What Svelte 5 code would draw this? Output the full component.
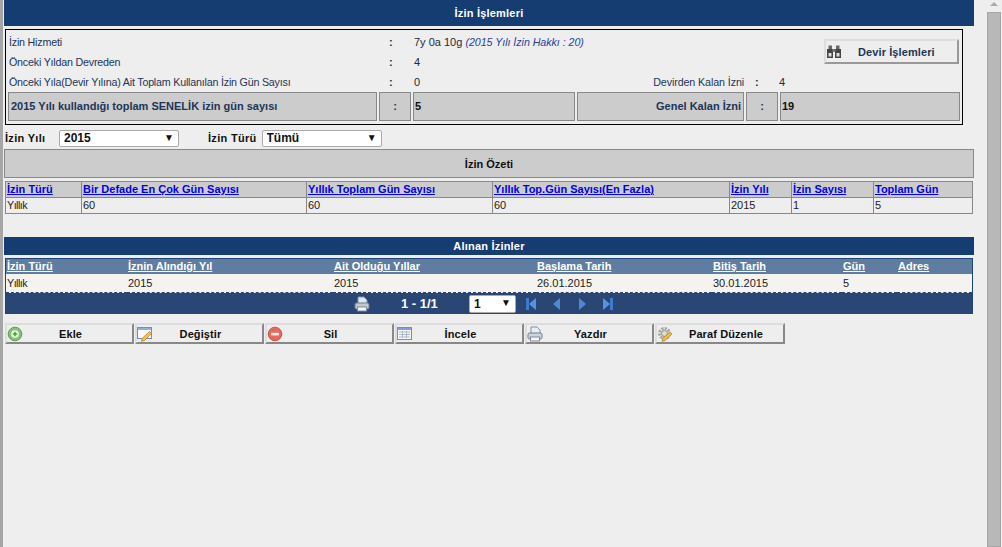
<script lang="ts">
  const ozetCols = [
    'İzin Türü',
    'Bir Defade En Çok Gün Sayısı',
    'Yıllık Toplam Gün Sayısı',
    'Yıllık Top.Gün Sayısı(En Fazla)',
    'İzin Yılı',
    'İzin Sayısı',
    'Toplam Gün'
  ];
  const ozetRow = ['Yıllık', '60', '60', '60', '2015', '1', '5'];
  const ozetWidths = [76, 225, 186, 237, 62, 82, 99];

  const alinanCols = ['İzin Türü', 'İznin Alındığı Yıl', 'Ait Olduğu Yıllar', 'Başlama Tarih', 'Bitiş Tarih', 'Gün', 'Adres'];
  const alinanRow = ['Yıllık', '2015', '2015', '26.01.2015', '30.01.2015', '5', ''];
  const alinanWidths = [121, 206, 203, 176, 130, 55, 75];

  const buttons = [
    { label: 'Ekle', icon: 'add' },
    { label: 'Değiştir', icon: 'edit' },
    { label: 'Sil', icon: 'del' },
    { label: 'İncele', icon: 'grid' },
    { label: 'Yazdır', icon: 'print' },
    { label: 'Paraf Düzenle', icon: 'gear' }
  ];
</script>

{#snippet printer(light)}
  <svg width="16" height="16" viewBox="0 0 16 16">
    <path d="M4 1h6l3 3v4H4z" fill={light ? '#e8eef8' : '#dfe8f5'} stroke="#7f93ad" />
    <rect x="1" y="7" width="14" height="6" rx="1.5" fill={light ? '#cfd3d8' : '#c3c8ce'} stroke="#6f7c8c" />
    <rect x="3.5" y="11" width="9" height="4" fill="#f4f6f8" stroke="#7f8b99" />
  </svg>
{/snippet}

{#snippet icon(name)}
  {#if name === 'add'}
    <svg width="16" height="16" viewBox="0 0 16 16">
      <circle cx="8" cy="8" r="6.8" fill="#86c276" stroke="#5b9c50" />
      <circle cx="8" cy="8" r="3.8" fill="#f2f8ee" />
      <path d="M8 5.8v4.4M5.8 8h4.4" stroke="#4d9a45" stroke-width="1.6" />
    </svg>
  {:else if name === 'edit'}
    <svg width="16" height="16" viewBox="0 0 16 16">
      <rect x="0.5" y="1.5" width="14" height="11" fill="#f7f9fd" stroke="#6f8fc4" />
      <rect x="1" y="2" width="13" height="2" fill="#8fb0e0" />
      <path d="M12.5 5.5l2 2-7 7-3 .8.8-3z" fill="#f2c14e" stroke="#b5832a" stroke-width="0.8" />
    </svg>
  {:else if name === 'del'}
    <svg width="16" height="16" viewBox="0 0 16 16">
      <circle cx="8" cy="8" r="6.8" fill="#e8675c" stroke="#c4574c" />
      <rect x="4" y="6.8" width="8" height="2.6" fill="#fbeeea" />
    </svg>
  {:else if name === 'grid'}
    <svg width="16" height="16" viewBox="0 0 16 16">
      <rect x="0.5" y="1.5" width="14" height="12" fill="#f6f8fc" stroke="#6f8fc4" />
      <rect x="1" y="2" width="13" height="2" fill="#7ea2d8" />
      <path d="M2 6h11M2 8.5h11M2 11h11M5.5 5v7M9.5 5v7" stroke="#a9b6cc" />
    </svg>
  {:else if name === 'print'}
    {@render printer(true)}
  {:else}
    <svg width="16" height="16" viewBox="0 0 16 16">
      <circle cx="7.5" cy="7.5" r="5" fill="none" stroke="#a8a8a4" stroke-width="3" stroke-dasharray="2.2 1.1" />
      <circle cx="7.5" cy="7.5" r="3" fill="#dcdcd8" stroke="#8d8d8a" />
      <path d="M13 6l2 2-7 6.5-3 .8.8-3z" fill="#f0bd50" stroke="#b5832a" stroke-width="0.8" />
    </svg>
  {/if}
{/snippet}

<div class="page">
  <main>
    <div class="bar title">İzin İşlemleri</div>

    <section class="info">
      <div class="info-top">
        <div class="info-rows">
          <div class="row">
            <span class="lbl">İzin Hizmeti</span><b class="sep">:</b>
            <span>7y 0a 10g <em>(2015 Yılı İzin Hakkı : 20)</em></span>
          </div>
          <div class="row">
            <span class="lbl">Önceki Yıldan Devreden</span><b class="sep">:</b><span>4</span>
          </div>
          <div class="row">
            <span class="lbl">Önceki Yıla(Devir Yılına) Ait Toplam Kullanılan İzin Gün Sayısı</span><b class="sep">:</b>
            <span class="zero">0</span>
            <span class="kalan">Devirden Kalan İzni</span><b class="sep2">:</b><span>4</span>
          </div>
        </div>
        <button class="devir">
          <svg width="14" height="13" viewBox="0 0 14 13">
            <rect x="1.5" y="0.5" width="3.5" height="4" fill="#666" />
            <rect x="9" y="0.5" width="3.5" height="4" fill="#666" />
            <rect x="0" y="4" width="6" height="9" fill="#444" />
            <rect x="8" y="4" width="6" height="9" fill="#444" />
            <rect x="5.5" y="4" width="3" height="3" fill="#777" />
            <rect x="1.5" y="8" width="3" height="3.5" fill="#ddd" />
            <rect x="9.5" y="8" width="3" height="3.5" fill="#ddd" />
          </svg>
          <span>Devir İşlemleri</span>
        </button>
      </div>
      <div class="totals">
        <div class="cell">2015 Yılı kullandığı toplam SENELİK izin gün sayısı</div>
        <div class="cell mid">:</div>
        <div class="cell val">5</div>
        <div class="cell right">Genel Kalan İzni</div>
        <div class="cell mid">:</div>
        <div class="cell val">19</div>
      </div>
    </section>

    <div class="filters">
      <label for="yil">İzin Yılı</label>
      <div class="select yil">
        <select id="yil"><option>2015</option></select>
        <i>▼</i>
      </div>
      <label for="tur" class="tur-lbl">İzin Türü</label>
      <div class="select">
        <select id="tur"><option>Tümü</option></select>
        <i>▼</i>
      </div>
    </div>

    <div class="ozet-title">İzin Özeti</div>

    <table class="ozet">
      <colgroup>
        {#each ozetWidths as w}<col style="width:{w}px" />{/each}
      </colgroup>
      <thead>
        <tr>
          {#each ozetCols as c}<th><a href="#top">{c}</a></th>{/each}
        </tr>
      </thead>
      <tbody>
        <tr>
          {#each ozetRow as v}<td>{v}</td>{/each}
        </tr>
      </tbody>
    </table>

    <div class="bar sub">Alınan İzinler</div>

    <div class="grid-box">
      <table class="alinan">
        <colgroup>
          {#each alinanWidths as w}<col style="width:{w}px" />{/each}
        </colgroup>
        <thead>
          <tr>
            {#each alinanCols as c}<th><a href="#top">{c}</a></th>{/each}
          </tr>
        </thead>
        <tbody>
          <tr>
            {#each alinanRow as v}<td>{v}</td>{/each}
          </tr>
        </tbody>
      </table>
      <div class="pager">
        <span class="pg-print">{@render printer(false)}</span>
        <span class="pg-text">1 - 1/1</span>
        <div class="select pg-select">
          <select><option>1</option></select>
          <i>▼</i>
        </div>
        <div class="pg-nav">
          <svg width="12" height="14" viewBox="0 0 12 14"><rect x="1" y="1" width="3" height="12" fill="#3f7ad0" /><path d="M11 1v12L4 7z" fill="#5a92e0" /></svg>
          <svg width="10" height="14" viewBox="0 0 10 14"><path d="M8 1v12L1 7z" fill="#4f88d8" /></svg>
          <svg width="10" height="14" viewBox="0 0 10 14"><path d="M2 1v12l7-6z" fill="#4f88d8" /></svg>
          <svg width="12" height="14" viewBox="0 0 12 14"><path d="M1 1v12l7-6z" fill="#5a92e0" /><rect x="8" y="1" width="3" height="12" fill="#3f7ad0" /></svg>
        </div>
      </div>
    </div>

    <div class="actions">
      {#each buttons as b}
        <button class="act">
          <span class="act-icon">{@render icon(b.icon)}</span>
          <span class="act-label">{b.label}</span>
        </button>
      {/each}
    </div>
  </main>

  <div class="scrollbar">
    <div class="arrow"></div>
    <div class="thumb"></div>
  </div>
</div>

<style>
  :global(body) {
    margin: 0;
    background: #eeeeee;
  }

  .page {
    display: flex;
    height: 547px;
    overflow: hidden;
    border-left: 3px solid #a6a6a6;
    background: #eeeeee;
    font-family: "Liberation Sans", Arial, sans-serif;
    font-size: 11px;
    color: #1d3557;
  }

  main {
    width: 970px;
    margin-left: 1px;
    flex: none;
  }

  .bar {
    background: #163d72;
    color: #fff;
    font-weight: bold;
    text-align: center;
    letter-spacing: 0.2px;
  }

  .title {
    height: 26px;
    line-height: 27px;
  }

  .info {
    box-sizing: border-box;
    width: 958px;
    height: 96px;
    margin: 3px 0 0 1px;
    border: 1.5px solid #000;
    padding: 0 2px;
  }

  .info-top {
    display: flex;
    height: 61px;
  }

  .info-rows {
    width: 960px;
    flex: none;
    padding-top: 2px;
    color: #1a2a40;
  }

  .row {
    display: flex;
    height: 20px;
    line-height: 20px;
    padding-left: 1px;
  }

  .lbl {
    width: 380px;
    flex: none;
    font-size: 10.7px;
    letter-spacing: -0.2px;
    color: #1d3557;
  }

  .sep {
    width: 25px;
    flex: none;
  }

  .zero {
    width: 230px;
    flex: none;
  }

  .kalan {
    width: 100px;
    flex: none;
    text-align: right;
    font-size: 10.7px;
    letter-spacing: -0.1px;
    color: #1d3557;
  }

  .sep2 {
    width: 24px;
    flex: none;
    margin-left: 11px;
  }

  em {
    color: #2a3f9e;
    font-size: 10.7px;
    letter-spacing: -0.05px;
  }

  .devir {
    flex: none;
    box-sizing: border-box;
    display: flex;
    align-items: center;
    width: 135px;
    height: 25px;
    margin: 9px 0 0 -144px;
    padding: 0 1px;
    background: #eeeeee;
    border: 2px solid;
    border-color: #dddddd #999999 #999999 #dddddd;
    font: bold 11px "Liberation Sans", Arial, sans-serif;
    letter-spacing: 0.1px;
    color: #1d3557;
  }

  .devir span {
    margin-left: 17px;
  }

  .totals {
    display: grid;
    grid-template-columns: 369px 32px 162px 167px 32px 180px;
    gap: 2px;
    margin-top: 1px;
  }

  .cell {
    box-sizing: border-box;
    height: 29px;
    line-height: 27px;
    border: 1px solid #888888;
    background: #cccccc;
    padding: 0 2px;
    font-weight: bold;
  }

  .cell.mid {
    text-align: center;
  }

  .cell.val {
    padding-left: 1px;
    color: #111;
  }

  .cell.right {
    text-align: right;
  }

  .filters {
    display: flex;
    align-items: center;
    height: 16px;
    margin-top: 5px;
    margin-left: 1px;
    font-weight: bold;
  }

  .filters label {
    color: #111;
    letter-spacing: 0.3px;
  }

  .filters label:first-child {
    width: 54px;
  }

  .tur-lbl {
    margin: 0 5px 0 29px;
  }

  .select {
    position: relative;
    box-sizing: border-box;
    width: 120px;
    height: 17px;
    background: #fff;
    border: 1px solid #aaaaaa;
    border-radius: 2px;
  }

  .select select {
    appearance: none;
    display: block;
    width: 100%;
    height: 100%;
    border: 0;
    padding: 0 0 0 4px;
    background: transparent;
    font: bold 12px "Liberation Sans", Arial, sans-serif;
    color: #111;
  }

  .select i {
    position: absolute;
    top: 1px;
    right: 4px;
    font-style: normal;
    font-size: 10px;
    color: #111;
    pointer-events: none;
  }

  .ozet-title {
    box-sizing: border-box;
    height: 29px;
    margin-top: 3px;
    line-height: 28px;
    border: 1px solid #888888;
    background: #cccccc;
    color: #111;
    font-weight: bold;
    text-align: center;
  }

  table {
    table-layout: fixed;
    border-collapse: collapse;
  }

  .ozet {
    width: 967px;
    margin: 3px 0 0 1px;
  }

  .ozet th,
  .ozet td {
    border: 1px solid #888888;
    padding: 0 1px;
    height: 15px;
    line-height: 15px;
    text-align: left;
    overflow: hidden;
    white-space: nowrap;
  }

  .ozet th {
    background: #cccccc;
  }

  .ozet th a {
    color: #0000ee;
  }

  .ozet td {
    color: #222;
  }

  td:first-child {
    font-size: 10.7px;
    letter-spacing: -0.5px;
  }

  .sub {
    height: 18px;
    line-height: 18px;
    margin-top: 23px;
  }

  .grid-box {
    box-sizing: border-box;
    width: 968px;
    height: 56px;
    margin: 3px 0 0 1px;
    border: 1px solid #1f4478;
  }

  .alinan {
    width: 966px;
  }

  .alinan th,
  .alinan td {
    padding: 0 1px;
    text-align: left;
    white-space: nowrap;
  }

  .alinan th {
    height: 15px;
    line-height: 15px;
    background: #5f7da0;
  }

  .alinan th a {
    color: #fff;
  }

  .alinan td {
    height: 18px;
    background: #f5f3ef;
    color: #222;
    border-bottom: 1px dashed #2a4675;
  }

  .pager {
    display: flex;
    align-items: center;
    height: 21px;
    background: #2a4675;
    color: #fff;
    font-weight: bold;
  }

  .pg-print {
    display: flex;
    margin-left: 348px;
  }

  .pg-text {
    width: 68px;
    margin-left: 31px;
    font-size: 13px;
  }

  .pg-select {
    width: 47px;
    height: 18px;
  }

  .pg-nav {
    display: flex;
    align-items: center;
    gap: 15px;
    margin-left: 9px;
  }

  .actions {
    display: flex;
    gap: 1px;
    margin: 9px 0 0 1px;
  }

  .act {
    box-sizing: border-box;
    display: flex;
    align-items: center;
    width: 129px;
    height: 21px;
    padding: 0;
    background: #eeeeee;
    border: 2px solid;
    border-color: #dddddd #888888 #888888 #dddddd;
    font: bold 11px "Liberation Sans", Arial, sans-serif;
    letter-spacing: 0.1px;
    color: #111;
  }

  .act:last-child {
    width: 130px;
  }

  .act-icon {
    display: flex;
    flex: none;
  }

  .act-label {
    flex: 1;
    text-align: center;
    padding-right: 14px;
  }

  .act:last-child .act-label {
    padding-right: 4px;
  }

  .scrollbar {
    display: flex;
    flex-direction: column;
    align-items: center;
    width: 14px;
    margin-left: 13px;
    flex: none;
  }

  .arrow {
    width: 0;
    height: 0;
    margin: 2px 0 6px;
    border-left: 4px solid transparent;
    border-right: 4px solid transparent;
    border-bottom: 4px solid #aaaaaa;
  }

  .thumb {
    box-sizing: border-box;
    width: 14px;
    flex: 1;
    background: #b8b8b8;
    border: 1px solid #a6a6a6;
  }
</style>
